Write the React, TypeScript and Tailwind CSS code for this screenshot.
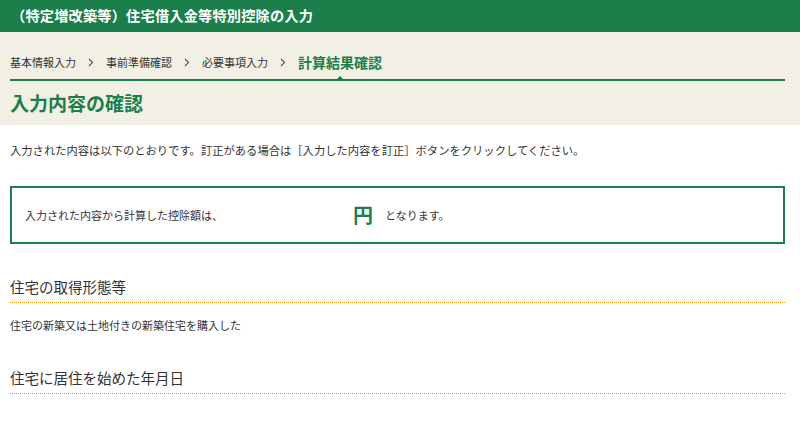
const font = { fontFamily: '"Noto Sans CJK JP", "Noto Sans", sans-serif' };

function Chevron() {
  return (
    <svg width="6" height="9" viewBox="0 0 6 9" className="mx-[12px]">
      <path d="M1 1 L4.5 4.5 L1 8" fill="none" stroke="#555" strokeWidth="1.1" />
    </svg>
  );
}

function SectionHeading({ children }: { children: React.ReactNode }) {
  return (
    <h3 className="ml-[10px] mr-[15px] border-b border-dotted border-b-[#f39c12] pb-[5px] text-[14.5px] leading-[20px] text-[#333]">
      {children}
    </h3>
  );
}

export default function App() {
  return (
    <div className="min-h-[448px] bg-white text-[#333]" style={font}>
      <header className="flex h-[32px] items-center bg-[#1a7f4b] px-[11px]">
        <h1 className="text-[14.2px] font-bold tracking-[0.2px] text-white">
          （特定増改築等）住宅借入金等特別控除の入力
        </h1>
      </header>

      <div className="bg-[#f2efe4] pb-[9px] pt-[19px]">
        <nav className="ml-[10px] mr-[15px] border-b-2 border-[#1a7f4b] pb-[6px]">
          <ol className="flex h-[22px] items-center text-[11px] text-[#333]">
            <li>基本情報入力</li>
            <Chevron />
            <li>事前準備確認</li>
            <Chevron />
            <li>必要事項入力</li>
            <Chevron />
            <li className="relative text-[14px] font-bold text-[#1a7f4b]">
              計算結果確認
              <span className="absolute left-1/2 top-[calc(100%+3px)] -translate-x-1/2 border-x-[4px] border-b-[4px] border-x-transparent border-b-[#1a7f4b]" />
            </li>
          </ol>
        </nav>
        <h2 className="mx-[10px] mt-[9px] text-[19px] font-bold leading-[26px] text-[#1a7f4b]">
          入力内容の確認
        </h2>
      </div>

      <p className="mx-[10px] mt-[16px] text-[11.3px] leading-[18px]">
        入力された内容は以下のとおりです。訂正がある場合は［入力した内容を訂正］ボタンをクリックしてください。
      </p>

      <div className="ml-[10px] mr-[15px] mt-[27px] flex h-[58px] items-center border-2 border-[#1a7f4b] px-[13px]">
        <span className="w-[328px] text-[11px]">入力された内容から計算した控除額は、</span>
        <span className="text-[20px] font-bold leading-none text-[#1a7f4b]">円</span>
        <span className="ml-[12px] text-[11px]">となります。</span>
      </div>

      <section className="mt-[33px]">
        <SectionHeading>住宅の取得形態等</SectionHeading>
        <p className="mx-[10px] mt-[13px] text-[11px] leading-[18px]">
          住宅の新築又は土地付きの新築住宅を購入した
        </p>
      </section>

      <section className="mt-[34px]">
        <SectionHeading>住宅に居住を始めた年月日</SectionHeading>
      </section>
    </div>
  );
}
